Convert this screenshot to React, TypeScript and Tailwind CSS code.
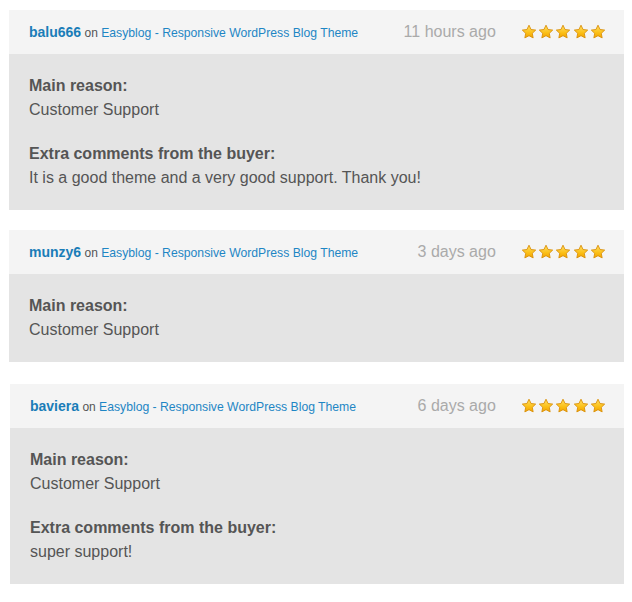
import React from 'react';

type Review = {
  user: string;
  time: string;
  reason: string;
  comment?: string;
};

const reviews: Review[] = [
  {
    user: 'balu666',
    time: '11 hours ago',
    reason: 'Customer Support',
    comment: 'It is a good theme and a very good support. Thank you!',
  },
  { user: 'munzy6', time: '3 days ago', reason: 'Customer Support' },
  {
    user: 'baviera',
    time: '6 days ago',
    reason: 'Customer Support',
    comment: 'super support!',
  },
];

const Star = ({ id }: { id: string }) => (
  <svg width="16" height="16" viewBox="0 0 16 16">
    <defs>
      <linearGradient id={id} x1="0" y1="0" x2="0" y2="1">
        <stop offset="0" stopColor="#ffe066" />
        <stop offset="0.6" stopColor="#fbbf16" />
        <stop offset="1" stopColor="#f2a300" />
      </linearGradient>
    </defs>
    <path
      d="M8 1.2l2.05 4.3 4.65.6-3.4 3.2.85 4.6L8 11.65 3.85 13.9l.85-4.6-3.4-3.2 4.65-.6z"
      fill={`url(#${id})`}
      stroke="#d9900a"
      strokeWidth="0.9"
      strokeLinejoin="round"
    />
  </svg>
);

const ReviewCard = ({ review, index }: { review: Review; index: number }) => {
  return (
    <div className={index === 2 ? 'ml-[10px] mr-[8px] mt-[22px]' : index === 1 ? 'ml-[9px] mr-[8px] mt-5' : 'ml-[9px] mr-[8px] mt-[10px]'}>
      {/* header */}
      <div className="flex items-center h-[44px] bg-[#f4f4f4] pl-5 pr-[17px]">
        <div className="flex-1 text-[12px] text-[#555] whitespace-nowrap">
          <span className="font-bold text-[14px] text-[#1a7db8]">{review.user}</span>{' '}
          on <span className="text-[12.2px] text-[#1e86c4]">Easyblog - Responsive WordPress Blog Theme</span>
        </div>
        <div className="text-[16px] text-[#aaaaaa] mr-[25px]">{review.time}</div>
        <div className="flex gap-[1.3px] pr-px">
          {[0, 1, 2, 3, 4].map((i) => (
            <Star key={i} id={`g${index}-${i}`} />
          ))}
        </div>
      </div>

      {/* body */}
      <div className="bg-[#e4e4e4] px-5 pt-5 pb-5 text-[16px] leading-6 text-[#555]">
        <div className="font-bold">Main reason:</div>
        <div>{review.reason}</div>
        {review.comment && (
          <div className="mt-5">
            <div className="font-bold">Extra comments from the buyer:</div>
            <div>{review.comment}</div>
          </div>
        )}
      </div>
    </div>
  );
};

export default function App() {
  return (
    <div className="w-[632px] h-[602px] bg-white overflow-hidden" style={{ fontFamily: '"Liberation Sans", Arial, sans-serif' }}>
      {reviews.map((r, i) => (
        <ReviewCard key={r.user} review={r} index={i} />
      ))}
    </div>
  );
}
